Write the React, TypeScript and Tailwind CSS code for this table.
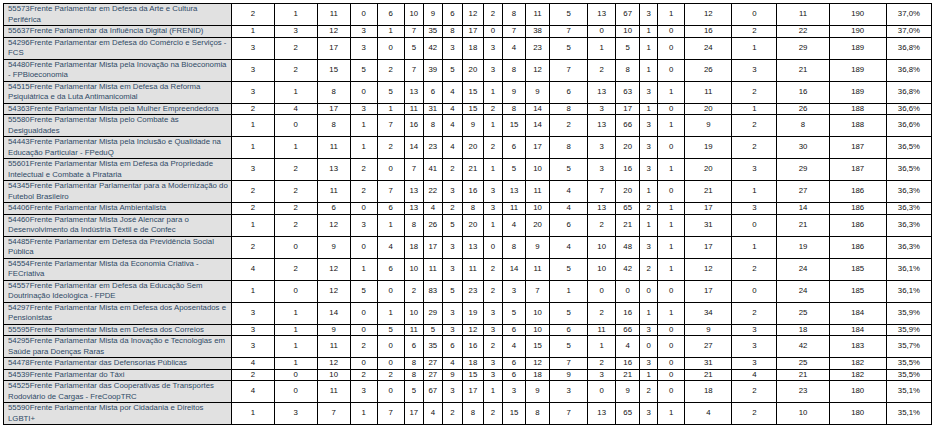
const rows: [string, string, (number | string)[]][] = [
  ['55573', 'Frente Parlamentar em Defesa da Arte e Cultura Periférica', [2, 1, 11, 0, 6, 10, 9, 6, 12, 2, 8, 11, 5, 13, 67, 3, 1, 12, 0, 11, 190, '37,0%']],
  ['55637', 'Frente Parlamentar da Influência Digital (FRENID)', [1, 3, 12, 3, 1, 7, 35, 8, 17, 0, 7, 38, 7, 0, 10, 1, 0, 16, 2, 22, 190, '37,0%']],
  ['54296', 'Frente Parlamentar em Defesa do Comércio e Serviços - FCS', [3, 2, 17, 3, 0, 5, 42, 3, 18, 3, 4, 23, 5, 1, 5, 1, 0, 24, 1, 29, 189, '36,8%']],
  ['54480', 'Frente Parlamentar Mista pela Inovação na Bioeconomia - FPBioeconomia', [3, 2, 15, 5, 2, 7, 39, 5, 20, 3, 8, 12, 7, 2, 8, 1, 0, 26, 3, 21, 189, '36,8%']],
  ['54515', 'Frente Parlamentar Mista em Defesa da Reforma Psiquiátrica e da Luta Antimanicomial', [3, 1, 8, 0, 5, 13, 6, 4, 15, 1, 9, 9, 6, 13, 63, 3, 1, 11, 2, 16, 189, '36,8%']],
  ['54363', 'Frente Parlamentar Mista pela Mulher Empreendedora', [2, 4, 17, 3, 1, 11, 31, 4, 15, 2, 8, 14, 8, 3, 17, 1, 0, 20, 1, 26, 188, '36,6%']],
  ['55580', 'Frente Parlamentar Mista pelo Combate às Desigualdades', [1, 0, 8, 1, 7, 16, 8, 4, 9, 1, 15, 14, 2, 13, 66, 3, 1, 9, 2, 8, 188, '36,6%']],
  ['54443', 'Frente Parlamentar Mista pela Inclusão e Qualidade na Educação Particular - FPeduQ', [1, 1, 11, 1, 2, 14, 23, 4, 20, 2, 6, 17, 8, 3, 20, 3, 0, 19, 2, 30, 187, '36,5%']],
  ['55601', 'Frente Parlamentar Mista em Defesa da Propriedade Intelectual e Combate à Pirataria', [3, 2, 13, 2, 0, 7, 41, 2, 21, 1, 5, 10, 5, 3, 16, 3, 1, 20, 3, 29, 187, '36,5%']],
  ['54345', 'Frente Parlamentar Parlamentar para a Modernização do Futebol Brasileiro', [2, 2, 11, 2, 7, 13, 22, 3, 16, 3, 13, 11, 4, 7, 20, 1, 0, 21, 1, 27, 186, '36,3%']],
  ['54406', 'Frente Parlamentar Mista Ambientalista', [2, 2, 6, 0, 6, 13, 4, 2, 8, 3, 11, 10, 4, 13, 65, 2, 1, 17, 3, 14, 186, '36,3%']],
  ['54460', 'Frente Parlamentar Mista José Alencar para o Desenvolvimento da Indústria Têxtil e de Confec', [1, 2, 12, 3, 1, 8, 26, 5, 20, 1, 4, 20, 6, 2, 21, 1, 1, 31, 0, 21, 186, '36,3%']],
  ['54485', 'Frente Parlamentar em Defesa da Previdência Social Pública', [2, 0, 9, 0, 4, 18, 17, 3, 13, 0, 8, 9, 4, 10, 48, 3, 1, 17, 1, 19, 186, '36,3%']],
  ['54554', 'Frente Parlamentar Mista da Economia Criativa - FECriativa', [4, 2, 12, 1, 6, 10, 11, 3, 11, 2, 14, 11, 5, 10, 42, 2, 1, 12, 2, 24, 185, '36,1%']],
  ['54557', 'Frente Parlamentar em Defesa da Educação Sem Doutrinação Ideológica - FPDE', [1, 0, 12, 5, 0, 2, 83, 5, 23, 2, 3, 7, 1, 0, 0, 0, 0, 17, 0, 24, 185, '36,1%']],
  ['54297', 'Frente Parlamentar Mista em Defesa dos Aposentados e Pensionistas', [3, 1, 14, 0, 1, 10, 29, 3, 19, 3, 5, 10, 5, 2, 16, 1, 1, 34, 2, 25, 184, '35,9%']],
  ['55595', 'Frente Parlamentar Mista em Defesa dos Correios', [3, 1, 9, 0, 5, 11, 5, 3, 12, 3, 6, 10, 6, 11, 66, 3, 0, 9, 3, 18, 184, '35,9%']],
  ['54295', 'Frente Parlamentar Mista da Inovação e Tecnologias em Saúde para Doenças Raras', [3, 1, 11, 2, 0, 6, 35, 6, 16, 2, 4, 15, 5, 1, 4, 0, 0, 27, 3, 42, 183, '35,7%']],
  ['54478', 'Frente Parlamentar das Defensorias Públicas', [4, 1, 12, 0, 0, 8, 27, 4, 18, 3, 6, 12, 7, 2, 16, 3, 0, 31, 3, 25, 182, '35,5%']],
  ['54539', 'Frente Parlamentar do Táxi', [2, 0, 10, 2, 2, 8, 27, 9, 15, 3, 6, 18, 9, 3, 21, 1, 0, 21, 4, 21, 182, '35,5%']],
  ['54525', 'Frente Parlamentar das Cooperativas de Transportes Rodoviário de Cargas - FreCoopTRC', [4, 0, 11, 3, 0, 5, 67, 3, 17, 1, 3, 9, 3, 0, 9, 2, 0, 18, 2, 23, 180, '35,1%']],
  ['55590', 'Frente Parlamentar Mista por Cidadania e Direitos LGBTI+', [1, 3, 7, 1, 7, 17, 4, 2, 8, 2, 15, 8, 7, 13, 65, 3, 1, 4, 2, 10, 180, '35,1%']],
]

// widths of the 22 value columns, left to right
const cols = [
  'w-[42px]', 'w-[43px]', 'w-[33px]', 'w-[27px]', 'w-[27px]', 'w-[19px]', 'w-[19px]', 'w-[20px]',
  'w-[21px]', 'w-[19px]', 'w-[23px]', 'w-[24px]', 'w-[38px]', 'w-[28px]', 'w-[24px]', 'w-[18px]',
  'w-[27px]', 'w-[47px]', 'w-[45px]', 'w-[52px]', 'w-[57px]', 'w-[45px]',
]

export default function App() {
  return (
    <div className="bg-white w-[934px] h-[427px] overflow-hidden pt-[3px] pl-[3px] font-['Liberation_Sans',Arial,sans-serif] text-[7.8px] leading-[10.5px]">
      <table className="table-fixed border-collapse w-[929px]">
        <colgroup>
          <col className="w-[228px]" />
          {cols.map((c, i) => (
            <col key={i} className={c} />
          ))}
        </colgroup>
        <tbody>
          {rows.map(([id, name, vals]) => (
            <tr key={id}>
              <td className="border border-black bg-[#e1e1e1] text-[#2f4a66] pl-[4px] pr-[1.5px] py-0 align-middle">
                {id}{name}
              </td>
              {vals.map((v, i) => (
                <td key={i} className="border border-black text-center text-[#111] p-0 align-middle">
                  {v}
                </td>
              ))}
            </tr>
          ))}
        </tbody>
      </table>
    </div>
  )
}
